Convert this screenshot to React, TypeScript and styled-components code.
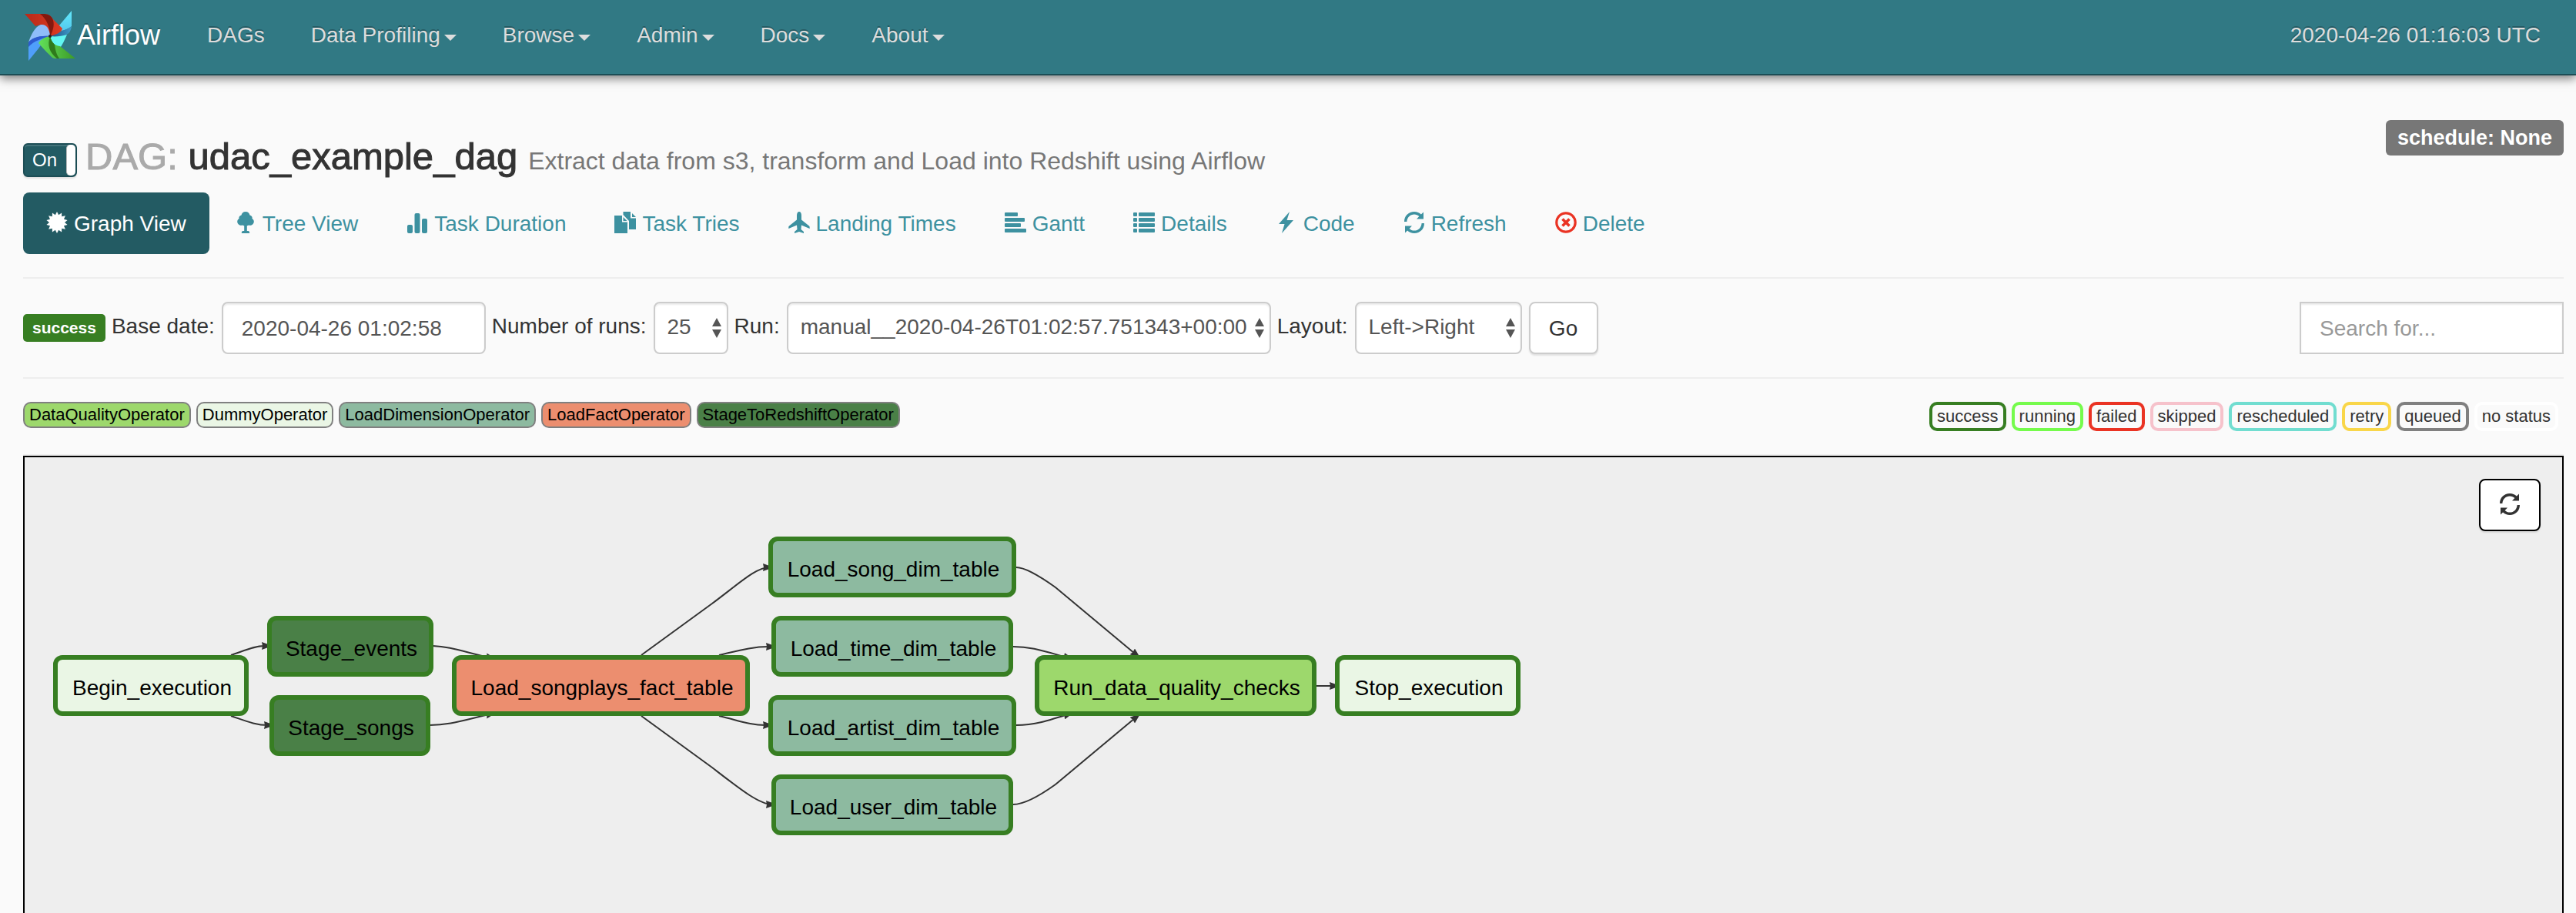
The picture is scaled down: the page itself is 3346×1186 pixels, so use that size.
import React from 'react';
import styled, { createGlobalStyle } from 'styled-components';

const GlobalStyle = createGlobalStyle`
  * { box-sizing: border-box; }
  body {
    margin: 0;
    background: #fafafa;
    color: #333;
    font-family: "Liberation Sans", "Helvetica Neue", Helvetica, Arial, sans-serif;
    font-size: 28px;
    line-height: 40px;
  }
  button, input, select { font: inherit; }
`;

const Page = styled.div`
  display: flex;
  flex-direction: column;
  min-height: 100vh;
`;

const Navbar = styled.header`
  display: flex;
  align-items: center;
  height: 98px;
  padding: 0 46px 4px 30px;
  background: #317984;
  border-bottom: 2px solid #1c4d55;
  box-shadow: 0 4px 12px rgba(0, 0, 0, 0.5);
  color: #ddd;
`;

const Brand = styled.a`
  display: flex;
  align-items: center;
  width: 209px;
  color: #fff;
  font-size: 36px;
  text-decoration: none;
  text-shadow: 0 -2px 0 rgba(0, 0, 0, 0.25);
`;

const Menu = styled.nav`
  display: flex;
  flex: 1;
`;

const MenuLink = styled.a`
  display: flex;
  align-items: center;
  padding: 0 30px;
  color: #ddd;
  text-decoration: none;
  text-shadow: 0 -2px 0 rgba(0, 0, 0, 0.25);
`;

const Caret = styled.span`
  margin: 6px 0 0 5px;
  border-top: 8px solid #ddd;
  border-left: 8px solid transparent;
  border-right: 8px solid transparent;
`;

const Clock = styled.time`
  text-shadow: 0 -2px 0 rgba(0, 0, 0, 0.25);
`;

const Main = styled.main`
  display: flex;
  flex: 1;
  flex-direction: column;
  padding: 58px 16px 0 30px;
`;

const TitleRow = styled.div`
  display: flex;
  align-items: flex-start;
  justify-content: space-between;
  height: 94px;
`;

const TitleGroup = styled.div`
  display: flex;
  align-items: flex-start;
  padding-top: 19px;
`;

const Toggle = styled.button`
  display: flex;
  align-items: center;
  justify-content: space-between;
  width: 70px;
  height: 44px;
  margin-top: 11px;
  padding: 0 0 0 10px;
  background: #235b63;
  border: 2px solid #1c4d55;
  border-radius: 6px;
  box-shadow: inset 0 2px 0 rgba(255, 255, 255, 0.15), 0 2px 2px rgba(0, 0, 0, 0.1);
  color: #fff;
  font-size: 24px;
`;

const Handle = styled.span`
  width: 12px;
  height: 40px;
  background: #fff;
  border-left: 1px solid #bbb;
  border-radius: 5px;
`;

const Title = styled.h1`
  margin: 0 0 0 11px;
  font-size: 49px;
  font-weight: 500;
  line-height: 56px;
  -webkit-text-stroke: 1px #333;
`;

const TitlePrefix = styled.span`
  color: #aaa;
  -webkit-text-stroke: 1px #aaa;
`;

const Description = styled.small`
  margin-left: 14px;
  color: #777;
  font-size: 32px;
  -webkit-text-stroke: 0;
`;

const ScheduleBadge = styled.span`
  padding: 0 15px;
  background: #777;
  border-radius: 6px;
  color: #fff;
  font-size: 27px;
  font-weight: 700;
  line-height: 46px;
`;

const Tabs = styled.nav`
  display: flex;
  gap: 3px;
  margin-bottom: 30px;
`;

const Tab = styled.a<{ $active?: boolean }>`
  display: flex;
  align-items: center;
  gap: 8px;
  height: 80px;
  padding: 2px 30px 0;
  border-radius: 8px;
  background: ${(p) => (p.$active ? '#235b63' : 'transparent')};
  color: ${(p) => (p.$active ? '#fff' : '#3d91a0')};
  text-decoration: none;
`;

const Glyph = styled.svg<{ $color?: string }>`
  flex: none;
  width: 28px;
  height: 28px;
  margin-bottom: 4px;
  color: ${(p) => p.$color ?? 'inherit'};
  fill: currentColor;
`;

const Controls = styled.form`
  display: flex;
  align-items: center;
  height: 132px;
  border-top: 2px solid #eee;
  border-bottom: 2px solid #eee;
`;

const StateBadge = styled.span`
  padding: 0 12px;
  background: #377e22;
  border-radius: 5px;
  color: #fff;
  font-size: 21px;
  font-weight: 700;
  line-height: 36px;
`;

const FieldLabel = styled.label`
  margin: 0 9px 4px 8px;
`;

const TextBox = styled.input<{ $square?: boolean }>`
  width: 343px;
  height: 68px;
  padding: 2px 24px 0;
  background: #fff;
  border: 2px solid #ccc;
  border-radius: ${(p) => (p.$square ? '0' : '8px')};
  box-shadow: inset 0 2px 2px rgba(0, 0, 0, 0.075);
  color: #555;
  &::placeholder { color: #999; }
`;

const SearchBox = styled(TextBox)`
  margin-left: auto;
`;

const SelectWrap = styled.span`
  position: relative;
  display: flex;
`;

const Select = styled.select<{ $width: number }>`
  appearance: none;
  width: ${(p) => p.$width}px;
  height: 68px;
  padding: 0 0 2px 16px;
  background: #fff;
  border: 2px solid #ccc;
  border-radius: 8px;
  box-shadow: inset 0 2px 2px rgba(0, 0, 0, 0.075);
  color: #555;
`;

const Arrows = styled.svg`
  position: absolute;
  top: 21px;
  right: 9px;
  width: 12px;
  height: 26px;
  fill: #555;
  pointer-events: none;
`;

const GoButton = styled.button`
  width: 90px;
  height: 68px;
  margin-left: 9px;
  padding: 2px 0 0;
  background: #fff;
  border: 2px solid #ccc;
  border-radius: 8px;
  box-shadow: 0 2px 2px rgba(0, 0, 0, 0.1);
  color: #333;
`;

const Legend = styled.section`
  display: flex;
  align-items: flex-start;
  justify-content: space-between;
  height: 100px;
  padding: 30px 7px 0 0;
  border-bottom: 2px solid #eee;
  font-size: 22px;
`;

const LegendGroup = styled.div`
  display: flex;
  gap: 7px;
`;

const OperatorTag = styled.span<{ $fill: string }>`
  padding: 0 6px;
  background: ${(p) => p.$fill};
  border: 2px solid #808080;
  border-radius: 10px;
  color: #000;
  line-height: 30px;
`;

const StatusTag = styled.span<{ $color: string }>`
  padding: 0 6px;
  border: 4px solid ${(p) => p.$color};
  border-radius: 10px;
  line-height: 30px;
`;

const Graph = styled.section`
  position: relative;
  flex: 1;
  min-height: 594px;
  overflow: hidden;
  background: #eee;
  border: 2px solid #000;
  border-bottom: 0;
`;

const Edges = styled.svg`
  position: absolute;
  top: 0;
  left: 0;
  width: 2000px;
  height: 590px;
  fill: none;
  stroke: #333;
  stroke-width: 2px;
`;

const Node = styled.div<{ $x: number; $y: number; $w: number; $fill: string }>`
  position: absolute;
  left: ${(p) => p.$x}px;
  top: ${(p) => p.$y}px;
  width: ${(p) => p.$w}px;
  height: 79px;
  padding: 4px 0 0 3px;
  background: ${(p) => p.$fill};
  border: 6px solid #377e22;
  border-radius: 12px;
  color: #000;
  line-height: 66px;
  text-align: center;
  white-space: nowrap;
`;

const RefreshButton = styled.button`
  position: absolute;
  top: 28px;
  right: 28px;
  display: flex;
  align-items: center;
  justify-content: center;
  width: 80px;
  height: 68px;
  padding: 2px 0 0;
  background: #fff;
  border: 2px solid #000;
  border-radius: 8px;
  box-shadow: 0 2px 2px rgba(0, 0, 0, 0.1);
  color: #333;
`;

const burst = Array.from({ length: 28 }, (_, i) => {
  const r = i % 2 ? 10 : 14;
  const a = (i * Math.PI) / 14;
  return `${(14 + r * Math.sin(a)).toFixed(1)},${(14 - r * Math.cos(a)).toFixed(1)}`;
}).join(' ');

const icons: Record<string, React.ReactNode> = {
  burst: <polygon points={burst} />,
  tree: <path d="M14 0c3 0 5 2 5.500 4.500C22 5 23 7 22.500 9c2.500 1.500 3 4.500 1.500 6.500-1.500 2.200-4 2.700-6 2-.7.500-1.500.700-2.200.700V25h1.700c1 0 1.700 1 1.700 3H8.800c0-2 .7-3 1.700-3h1.700v-6.800c-.7 0-1.500-.2-2.200-.7-2 .7-4.500.2-6-2C2.500 13.500 3 10.500 5.500 9 5 7 6 5 8.500 4.500 9 2 11 0 14 0z" />,
  bars: (
    <g>
      <rect x="1" y="17" width="7" height="11" rx="2" />
      <rect x="10.500" y="2" width="7" height="26" rx="2" />
      <rect x="20" y="9" width="7" height="19" rx="2" />
    </g>
  ),
  duplicate: (
    <g>
      <path d="M0 5h10v8.500h7V28H0z" />
      <path d="M11.500 7l5 5h-5z" />
      <path d="M11.500 0H21v8.500h7V23h-9V12l-7.500-8z" />
      <path d="M23 2l5 5h-5z" />
    </g>
  ),
  plane: <path d="M14 0c2 0 3 2 3 5v5.500l10 8c.7.600.7 1 .7 3.500L17 17.500 16.500 23l3.500 3v2l-6-2-6 2v-2l3.500-3-.5-5.500L.3 22c0-2.500 0-2.900.7-3.500l10-8V5c0-3 1-5 3-5z" />,
  gantt: (
    <g>
      <rect x="0" y="1" width="17" height="5" rx="1" />
      <rect x="0" y="8" width="26" height="5" rx="1" />
      <rect x="0" y="15" width="21" height="5" rx="1" />
      <rect x="0" y="22" width="28" height="5" rx="1" />
    </g>
  ),
  list: (
    <g>
      {[1, 8, 15, 22].map((y) => (
        <g key={y}>
          <rect x="0" y={y} width="5" height="5" rx="1" />
          <rect x="7" y={y} width="21" height="5" rx="1" />
        </g>
      ))}
    </g>
  ),
  flash: <path d="M18 0L4 16h7.500L8 28l15-17h-8.500z" />,
  refresh: (
    <g>
      <path d="M1 13C1 5.500 6.500 0 14 0c3.600 0 6.600 1.300 8.900 3.500L26 .5V9.500H17l3.400-3.500C18.700 4.300 16.500 3.400 14 3.400c-5.300 0-9.300 4-9.600 9.600z" />
      <path d="M27 15c0 7.500-5.500 13-13 13-3.600 0-6.600-1.300-8.900-3.500L2 27.500V18.500h9l-3.400 3.500c1.700 1.700 3.900 2.600 6.400 2.600 5.300 0 9.300-4 9.600-9.600z" />
    </g>
  ),
  remove: (
    <g fill="none" stroke="currentColor">
      <circle cx="14" cy="14" r="12.200" strokeWidth="3.200" />
      <path d="M9.500 9.500l9 9M18.500 9.500l-9 9" strokeWidth="3.600" />
    </g>
  ),
};

function Icon({ name, color }: { name: string; color?: string }) {
  return (
    <Glyph viewBox="0 0 28 28" $color={color} aria-hidden="true">
      {icons[name]}
    </Glyph>
  );
}

function Logo() {
  return (
    <svg width="70" height="68" viewBox="0 0 70 68" aria-hidden="true">
      <defs>
        <linearGradient id="red" x1="0" x2="1"><stop offset="0" stopColor="#b82a1a" /><stop offset="1" stopColor="#dd3a22" /></linearGradient>
        <linearGradient id="sky" x1="0" y1="0" x2="0" y2="1"><stop offset="0" stopColor="#63e8fb" /><stop offset="1" stopColor="#4fc0e8" /></linearGradient>
        <linearGradient id="green" x1="0" x2="1"><stop offset="0" stopColor="#62e05a" /><stop offset="1" stopColor="#3d9a26" /></linearGradient>
        <linearGradient id="band" x1="0" x2="1"><stop offset="0" stopColor="#1f4f86" /><stop offset="1" stopColor="#3f9cc8" /></linearGradient>
      </defs>
      <path d="M63 2V22C56 28 45 29 35 35L47 21z" fill="url(#sky)" />
      <path d="M63 22c-1 8-5 11-9 12-7 2-14 1-19 1 10-8 22-7 28-13z" fill="url(#band)" />
      <path d="M35 35c7 1 15 0 22-2-3 7-6 13-10 19-7-3-10-9-12-17z" fill="#62f6f2" />
      <path d="M2 6h23c7 0 11 2 13 6l13 13c-1 5-8 8-16 10 0-6-4-14-12-15l-7 2z" fill="url(#red)" />
      <path d="M22 6h4c6 0 10 2 12 6 3 6 2 14-3 23 0-11-4-22-13-29z" fill="#83190f" />
      <path d="M23 20c7-1 11 4 12 15-15-1-23 3-28 8 3-9 8-20 16-23z" fill="#8fbdfa" />
      <path d="M7 43c5-6 13-9 28-8-10 3-21 7-28 15z" fill="#2d5bd0" />
      <path d="M7 49c7-8 18-11 28-14-5 3-10 8-15 16L7 67z" fill="#4f9ffb" />
      <path d="M35 35c-7 1-13 5-15 9 5 6 13 14 17 18 2 2 4 2 7 2h24L48 48c-8-1-12-6-13-13z" fill="url(#green)" />
      <path d="M35 35c-4 12-1 21 9 29h3c-4-6-5-11-6-18-3-3-5-7-6-11z" fill="#2f7a1c" />
      <circle cx="35" cy="35" r="2" fill="#222" />
    </svg>
  );
}

const menu = [
  { label: 'DAGs', caret: false },
  { label: 'Data Profiling', caret: true },
  { label: 'Browse', caret: true },
  { label: 'Admin', caret: true },
  { label: 'Docs', caret: true },
  { label: 'About', caret: true },
];

const tabs = [
  { label: 'Graph View', icon: 'burst', active: true },
  { label: 'Tree View', icon: 'tree' },
  { label: 'Task Duration', icon: 'bars' },
  { label: 'Task Tries', icon: 'duplicate' },
  { label: 'Landing Times', icon: 'plane' },
  { label: 'Gantt', icon: 'gantt' },
  { label: 'Details', icon: 'list' },
  { label: 'Code', icon: 'flash' },
  { label: 'Refresh', icon: 'refresh' },
  { label: 'Delete', icon: 'remove', color: '#ea3323' },
];

const QUALITY = '#9dd86c';
const DUMMY = '#eaf6e5';
const DIMENSION = '#8dbaa0';
const FACT = '#ec8e6f';
const STAGE = '#4a8047';

const operators = [
  ['DataQualityOperator', QUALITY],
  ['DummyOperator', DUMMY],
  ['LoadDimensionOperator', DIMENSION],
  ['LoadFactOperator', FACT],
  ['StageToRedshiftOperator', STAGE],
];

const statuses = [
  ['success', '#377e22'],
  ['running', '#75fb4c'],
  ['failed', '#ea3323'],
  ['skipped', '#f6c2cb'],
  ['rescheduled', '#71ddd0'],
  ['retry', '#f9d649'],
  ['queued', '#808080'],
  ['no status', '#fff'],
];

const nodes = [
  { label: 'Begin_execution', x: 37, y: 257, w: 254, fill: DUMMY },
  { label: 'Stage_events', x: 315, y: 206, w: 216, fill: STAGE },
  { label: 'Stage_songs', x: 318, y: 309, w: 209, fill: STAGE },
  { label: 'Load_songplays_fact_table', x: 555, y: 257, w: 387, fill: FACT },
  { label: 'Load_song_dim_table', x: 966, y: 103, w: 322, fill: DIMENSION },
  { label: 'Load_time_dim_table', x: 970, y: 206, w: 314, fill: DIMENSION },
  { label: 'Load_artist_dim_table', x: 966, y: 309, w: 322, fill: DIMENSION },
  { label: 'Load_user_dim_table', x: 970, y: 412, w: 314, fill: DIMENSION },
  { label: 'Run_data_quality_checks', x: 1312, y: 257, w: 366, fill: QUALITY },
  { label: 'Stop_execution', x: 1702, y: 257, w: 241, fill: DUMMY },
];

const edges = [
  'M268 257C286 251 299 245 312 245L320 245',
  'M268 336C286 342 299 348 316 348L323 348',
  'M530 245C553 246 568 252 611 262',
  'M526 348C553 348 568 342 611 332',
  'M801 257L893 190C928 164 950 143 967 143L971 143',
  'M902 257C928 251 946 246 966 246L975 246',
  'M902 336C928 342 942 348 962 348L971 348',
  'M801 336L893 403C928 430 954 451 971 451L975 451',
  'M1288 143C1300 143 1318 154 1339 169L1448 260',
  'M1284 246C1308 246 1324 252 1361 262',
  'M1288 348C1312 348 1330 342 1361 332',
  'M1284 451C1298 451 1318 440 1339 425L1448 334',
  'M1678 297L1707 297',
];

function Dropdown({ id, label, value, width }: { id: string; label: string; value: string; width: number }) {
  return (
    <>
      <FieldLabel htmlFor={id}>{label}</FieldLabel>
      <SelectWrap>
        <Select id={id} $width={width} defaultValue={value}>
          <option value={value}>{value}</option>
        </Select>
        <Arrows viewBox="0 0 12 26" aria-hidden="true">
          <path d="M6 0l6 11H0zM6 26l6-11H0z" />
        </Arrows>
      </SelectWrap>
    </>
  );
}

export default function App() {
  return (
    <Page>
      <GlobalStyle />
      <Navbar>
        <Brand href="#">
          <Logo />
          Airflow
        </Brand>
        <Menu>
          {menu.map((m) => (
            <MenuLink href="#" key={m.label}>
              {m.label}
              {m.caret && <Caret />}
            </MenuLink>
          ))}
        </Menu>
        <Clock>2020-04-26 01:16:03 UTC</Clock>
      </Navbar>
      <Main>
        <TitleRow>
          <TitleGroup>
            <Toggle type="button" aria-pressed="true">
              On
              <Handle />
            </Toggle>
            <Title>
              <TitlePrefix>DAG:</TitlePrefix> udac_example_dag
              <Description>Extract data from s3, transform and Load into Redshift using Airflow</Description>
            </Title>
          </TitleGroup>
          <ScheduleBadge>schedule: None</ScheduleBadge>
        </TitleRow>
        <Tabs>
          {tabs.map((t) => (
            <Tab href="#" key={t.label} $active={t.active}>
              <Icon name={t.icon} color={t.color} />
              {t.label}
            </Tab>
          ))}
        </Tabs>
        <Controls onSubmit={(e) => e.preventDefault()}>
          <StateBadge>success</StateBadge>
          <FieldLabel htmlFor="base-date">Base date:</FieldLabel>
          <TextBox id="base-date" type="text" defaultValue="2020-04-26 01:02:58" />
          <Dropdown id="runs" label="Number of runs:" value="25" width={97} />
          <Dropdown id="run" label="Run:" value="manual__2020-04-26T01:02:57.751343+00:00" width={629} />
          <Dropdown id="layout" label="Layout:" value="Left->Right" width={217} />
          <GoButton type="submit">Go</GoButton>
          <SearchBox $square type="text" placeholder="Search for..." aria-label="Search for..." />
        </Controls>
        <Legend>
          <LegendGroup>
            {operators.map(([name, fill]) => (
              <OperatorTag key={name} $fill={fill}>{name}</OperatorTag>
            ))}
          </LegendGroup>
          <LegendGroup>
            {statuses.map(([name, color]) => (
              <StatusTag key={name} $color={color}>{name}</StatusTag>
            ))}
          </LegendGroup>
        </Legend>
        <Graph>
          <Edges aria-hidden="true">
            <defs>
              <marker id="arrow" markerUnits="userSpaceOnUse" markerWidth="14" markerHeight="10" refX="12" refY="5" orient="auto">
                <path d="M0 0L14 5L0 10L1 5z" fill="#333" stroke="none" />
              </marker>
            </defs>
            {edges.map((d) => (
              <path key={d} d={d} markerEnd="url(#arrow)" />
            ))}
          </Edges>
          {nodes.map((n) => (
            <Node key={n.label} $x={n.x} $y={n.y} $w={n.w} $fill={n.fill}>{n.label}</Node>
          ))}
          <RefreshButton type="button" aria-label="Refresh">
            <Icon name="refresh" />
          </RefreshButton>
        </Graph>
      </Main>
    </Page>
  );
}
